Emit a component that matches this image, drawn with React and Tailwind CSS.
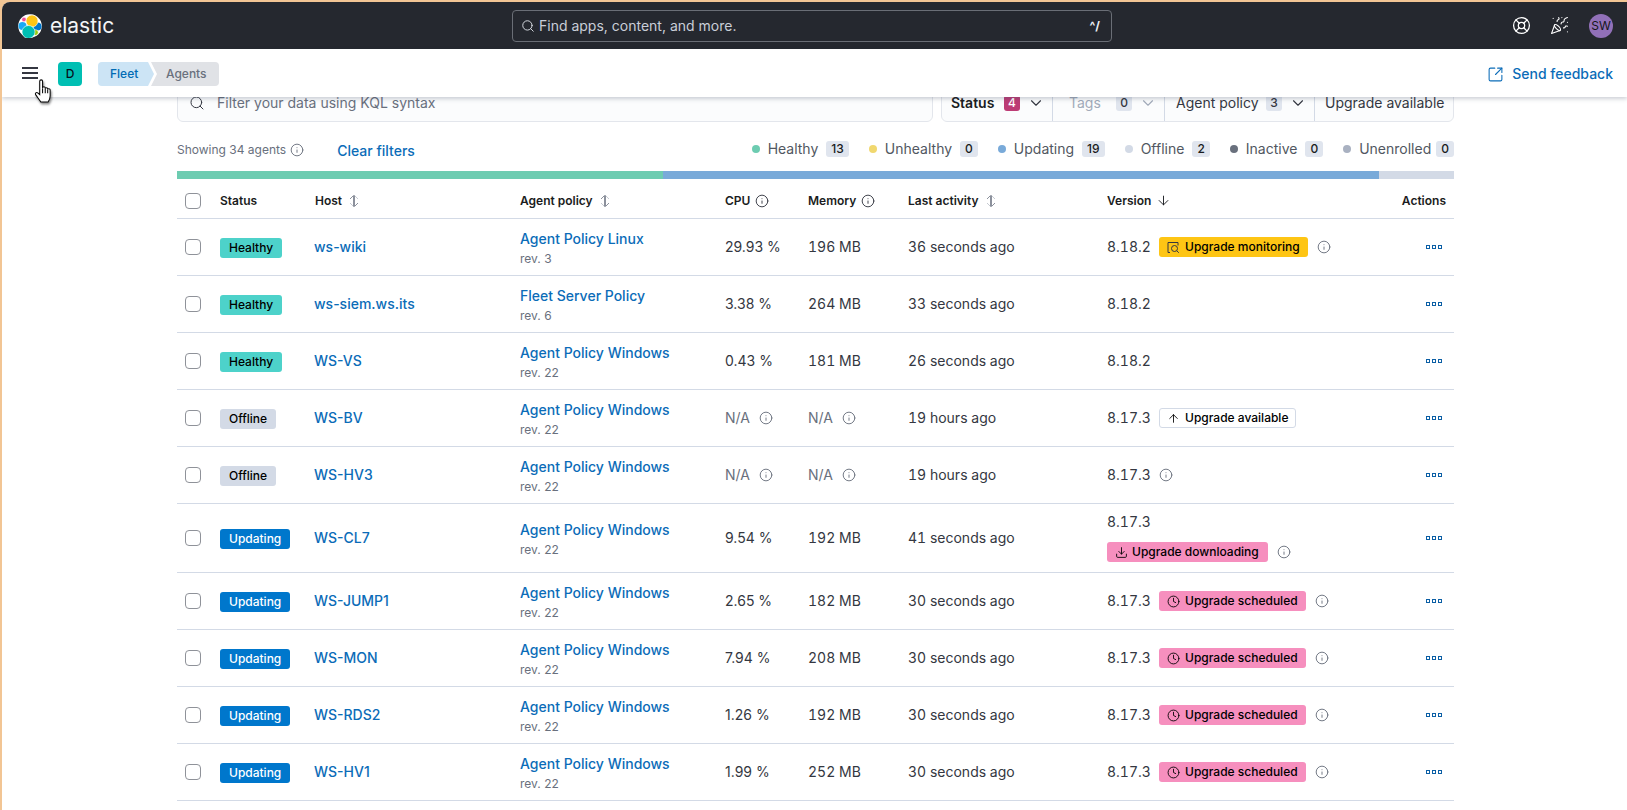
import React from 'react';
import { ArrowDown, ArrowUp, ChevronDown, Clock, Download, Info, LifeBuoy, PartyPopper, Search, SquareArrowOutUpRight } from 'lucide-react';

const rows = [
  { status: 'Healthy', host: 'ws-wiki', policy: 'Agent Policy Linux', rev: 3, cpu: '29.93 %', mem: '196 MB', last: '36 seconds ago', version: '8.18.2', tag: 'monitoring' },
  { status: 'Healthy', host: 'ws-siem.ws.its', policy: 'Fleet Server Policy', rev: 6, cpu: '3.38 %', mem: '264 MB', last: '33 seconds ago', version: '8.18.2' },
  { status: 'Healthy', host: 'WS-VS', policy: 'Agent Policy Windows', rev: 22, cpu: '0.43 %', mem: '181 MB', last: '26 seconds ago', version: '8.18.2' },
  { status: 'Offline', host: 'WS-BV', policy: 'Agent Policy Windows', rev: 22, cpu: 'N/A', mem: 'N/A', last: '19 hours ago', version: '8.17.3', tag: 'available' },
  { status: 'Offline', host: 'WS-HV3', policy: 'Agent Policy Windows', rev: 22, cpu: 'N/A', mem: 'N/A', last: '19 hours ago', version: '8.17.3', tag: 'info' },
  { status: 'Updating', host: 'WS-CL7', policy: 'Agent Policy Windows', rev: 22, cpu: '9.54 %', mem: '192 MB', last: '41 seconds ago', version: '8.17.3', tag: 'downloading' },
  { status: 'Updating', host: 'WS-JUMP1', policy: 'Agent Policy Windows', rev: 22, cpu: '2.65 %', mem: '182 MB', last: '30 seconds ago', version: '8.17.3', tag: 'scheduled' },
  { status: 'Updating', host: 'WS-MON', policy: 'Agent Policy Windows', rev: 22, cpu: '7.94 %', mem: '208 MB', last: '30 seconds ago', version: '8.17.3', tag: 'scheduled' },
  { status: 'Updating', host: 'WS-RDS2', policy: 'Agent Policy Windows', rev: 22, cpu: '1.26 %', mem: '192 MB', last: '30 seconds ago', version: '8.17.3', tag: 'scheduled' },
  { status: 'Updating', host: 'WS-HV1', policy: 'Agent Policy Windows', rev: 22, cpu: '1.99 %', mem: '252 MB', last: '30 seconds ago', version: '8.17.3', tag: 'scheduled' },
];

const legend = [
  { label: 'Healthy', count: 13, dot: 'bg-[#6dccb1]' },
  { label: 'Unhealthy', count: 0, dot: 'bg-[#f1d86f]' },
  { label: 'Updating', count: 19, dot: 'bg-[#79aad9]' },
  { label: 'Offline', count: 2, dot: 'bg-[#d3dae6]' },
  { label: 'Inactive', count: 0, dot: 'bg-[#69707d]' },
  { label: 'Unenrolled', count: 0, dot: 'bg-[#a9b1c1]' },
];

const statusStyles = {
  Healthy: 'bg-[#4dd2ca] text-black',
  Offline: 'bg-[#d3dae6] text-black',
  Updating: 'bg-[#0077cc] text-white',
};

const InfoIcon = ({ className = 'text-[#69707d]' }) => <Info size={14} strokeWidth={1.6} className={`shrink-0 ${className}`} />;

const ElasticLogo = () => (
  <svg width="24" height="24" viewBox="0 0 24 24">
    <circle cx="12" cy="12" r="11.8" fill="#fff" />
    <circle cx="4.500" cy="12" r="4" fill="#1ba9f5" />
    <circle cx="19.500" cy="12.500" r="4" fill="#0077cc" />
    <circle cx="6" cy="5.500" r="2.300" fill="#f04e98" stroke="#fff" strokeWidth="0.6" />
    <circle cx="17.500" cy="18.500" r="2.800" fill="#93c90e" stroke="#fff" strokeWidth="0.6" />
    <circle cx="14" cy="7" r="6" fill="#fec514" stroke="#fff" strokeWidth="0.6" />
    <circle cx="10.500" cy="18" r="6.500" fill="#00bfb3" stroke="#fff" strokeWidth="0.6" />
  </svg>
);

const SortIcon = () => (
  <svg width="12" height="14" viewBox="0 0 12 14" fill="none" strokeWidth="1" className="ml-[1px] shrink-0">
    <path d="M2 5 5.500 1.500V13M10 9l-3.500 3.500V1" stroke="#8c919c" />
    <path d="M6.500 1.500 10 5M5.500 12.500 2 9" stroke="#c6cad1" />
  </svg>
);

const MonitorIcon = () => (
  <svg width="13" height="13" viewBox="0 0 13 13" fill="none" stroke="#343741" strokeWidth="1">
    <path d="M3 11.500H1V1.500h10v3" />
    <circle cx="7.500" cy="7.500" r="3" />
    <path d="m9.800 9.800 2 2" />
  </svg>
);

const HandCursor = () => (
  <svg width="18" height="24" viewBox="0 0 16.800 23.500" className="absolute left-[32px] top-[77px] z-20 drop-shadow-[1px_2px_1px_rgba(0,0,0,0.45)]" fill="#fff" stroke="#000" strokeWidth="1">
    <path d="M5.200 2.200c0-1.800 2.800-1.800 2.800 0v6.600c0-1.500 2.600-1.500 2.600 0v.8c0-1.400 2.400-1.400 2.400 0v.8c0-1.200 2.400-1.200 2.400.2v6c0 2.600-1 4.400-2 6H6.400C5 20.800 2.800 17.500 1.200 15.300c-.9-1.400.7-2.800 2-1.700l2 1.800z" />
    <path d="M8 9v5M10.600 9.600V14M13 10.400V14" fill="none" />
  </svg>
);

const Tag = ({ className, icon, children }) => (
  <span className={`inline-flex h-5 items-center whitespace-nowrap rounded-[3px] text-xs font-medium text-black ${className}`}>
    {icon}
    {children}
  </span>
);

const VersionCell = ({ version, tag }) => {
  if (tag === 'downloading') {
    return (
      <div className="flex flex-col items-start">
        <span className="mb-[10px] mt-[-2px] leading-5">{version}</span>
        <div className="flex items-center gap-[9px]">
          <Tag className="gap-[4px] bg-[#f68fbe] pl-[8px] pr-[9px]" icon={<Download size={13} strokeWidth={1.6} />}>Upgrade downloading</Tag>
          <InfoIcon />
        </div>
      </div>
    );
  }
  return (
    <div className="flex items-center">
      <span className="w-[52px] shrink-0">{version}</span>
      {tag === 'monitoring' && <Tag className="gap-[5px] bg-[#fec514] px-[8px]" icon={<MonitorIcon />}>Upgrade monitoring</Tag>}
      {tag === 'scheduled' && <Tag className="gap-[5px] bg-[#f68fbe] px-[8px]" icon={<Clock size={13} strokeWidth={1.6} />}>Upgrade scheduled</Tag>}
      {tag === 'available' && (
        <Tag className="gap-[5px] border border-[#d3dae6] bg-white px-[7px]" icon={<ArrowUp size={13} strokeWidth={1.6} />}>Upgrade available</Tag>
      )}
      {tag === 'info' ? <InfoIcon /> : tag && tag !== 'available' && <span className="ml-[9px]"><InfoIcon /></span>}
    </div>
  );
};

const Th = ({ children, className = '' }) => (
  <th className={`border-b border-[#d3dae6] px-2 pt-1 text-left text-xs font-semibold text-[#1a1c21] ${className}`}>
    <div className="flex items-center gap-[5px]">{children}</div>
  </th>
);

const Td = ({ children, className = '' }) => (
  <td className={`border-b border-[#d3dae6] px-2 ${className}`}>{children}</td>
);

const Checkbox = () => <span className="block h-4 w-4 rounded-[4px] border border-[#8f9299] bg-white" />;

const FilterButton = ({ label, count, badge = 'bg-[#e0e5ee] text-[#343741]', bold, disabled, className }) => (
  <div className={`flex items-center border-r border-[#d3dae6] pt-[2px] ${className}`}>
    <span className={`${bold ? 'font-semibold text-[#1a1c21]' : disabled ? 'text-[#a2abba]' : 'text-[#343741]'}`}>{label}</span>
    <span className={`ml-auto flex h-4 w-4 items-center justify-center rounded-[3px] text-xs font-medium ${badge}`}>{count}</span>
    <ChevronDown size={18} strokeWidth={1.5} className={`ml-[7px] ${disabled ? 'text-[#a2abba]' : 'text-[#343741]'}`} />
  </div>
);

export default function App() {
  return (
    <div className="h-[810px] w-full overflow-hidden bg-[#f2c594] pl-[2px] pt-[2px] font-[Inter,sans-serif] text-sm text-[#343741]">
      <div className="relative flex h-full flex-col overflow-hidden rounded-tl-lg bg-white">
        <header className="flex h-[47px] shrink-0 items-center bg-[#25282f] pr-[14px] text-white">
          <div className="flex w-[510px] items-center gap-[8px] pl-[16px]">
            <ElasticLogo />
            <span className="text-[21px] leading-none text-[#f4f5f7]">elastic</span>
          </div>
          <div className="flex h-[32px] w-[600px] items-center rounded-[4px] border border-[#6a6e76] pl-[8px] pr-[11px]">
            <Search size={14} strokeWidth={1.6} className="text-[#dfe3ea]" />
            <span className="ml-[4px] text-[#c9ced8]">Find apps, content, and more.</span>
            <span className="ml-auto text-xs font-bold text-[#eceff4]">^/</span>
          </div>
          <div className="ml-auto flex items-center">
            <LifeBuoy size={19} strokeWidth={1.6} />
            <PartyPopper size={19} strokeWidth={1.4} className="ml-[19px]" />
            <span className="ml-[20px] flex h-6 w-6 items-center justify-center rounded-full bg-[#9170b8] text-xs text-[#14161a]">SW</span>
          </div>
        </header>

        <nav className="relative z-10 flex h-[48px] shrink-0 items-center bg-white pl-[20px] pr-[14px] pt-[2px] shadow-[0_2px_4px_rgba(60,70,95,0.25)]">
          <svg width="16" height="12" viewBox="0 0 16 12" stroke="#343741" strokeWidth="1.800" className="mb-[2px] mr-[20px]">
            <path d="M0 1h16M0 6h16M0 11h16" />
          </svg>
          <span className="flex h-6 w-6 items-center justify-center rounded-[4px] bg-[#00bfb3] text-xs font-medium text-[#07101c]">D</span>
          <div className="ml-[16px] flex h-6 items-center text-xs font-medium">
            <span className="flex h-full w-[56px] items-center rounded-l-[4px] bg-[#cce4f5] pl-[12px] text-[#006bb4] [clip-path:polygon(0_0,calc(100%-6px)_0,100%_50%,calc(100%-6px)_100%,0_100%)]">Fleet</span>
            <span className="ml-[-3px] flex h-full w-[68px] items-center rounded-r-[4px] bg-[#e0e2e6] pl-[15px] text-[#69707d] [clip-path:polygon(0_0,100%_0,100%_100%,0_100%,6px_50%)]">Agents</span>
          </div>
          <div className="ml-auto flex items-center gap-[5px] font-medium text-[#0b6cb8]">
            <SquareArrowOutUpRight size={17} strokeWidth={1.5} className="mr-[3px]" />
            <span>Send feedback</span>
          </div>
        </nav>

        <HandCursor />

        <main className="min-h-0 flex-1 pl-[175px] pr-[173px]">
          <div className="mt-[-15px] flex h-10 gap-[8px]">
            <div className="flex w-[756px] items-center rounded-b-[6px] border border-[#e3e6ec] bg-[#fbfcfd] pl-[11px] pt-[2px] text-[#69707d]">
              <Search size={16} strokeWidth={1.5} className="text-[#343741]" />
              <span className="ml-[12px]">Filter your data using KQL syntax</span>
            </div>
            <div className="flex flex-1 rounded-b-[6px] border border-[#e3e6ec] bg-[#fbfcfd]">
              <FilterButton label="Status" count={4} bold badge="bg-[#bd3c75] text-white" className="w-[111px] pl-[9px] pr-[7px]" />
              <FilterButton label="Tags" count={0} disabled className="w-[112px] pl-[16px] pr-[7px]" />
              <FilterButton label="Agent policy" count={3} className="w-[150px] pl-[11px] pr-[7px]" />
              <div className="flex flex-1 items-center pl-[10px] pt-[2px] text-[#343741]">Upgrade available</div>
            </div>
          </div>

          <div className="mt-[18px] flex h-5 items-center">
            <span className="text-xs text-[#69707d]">Showing 34 agents</span>
            <span className="ml-[4px]"><InfoIcon /></span>
            <span className="ml-[33px] mt-[2px] font-medium text-[#0b6cb8]">Clear filters</span>
            <div className="mb-[2px] ml-auto flex items-center gap-[20px] text-[#515761]">
              {legend.map((item) => (
                <div key={item.label} className="flex items-center">
                  <span className={`h-2 w-2 rounded-full ${item.dot}`} />
                  <span className="ml-[8px]">{item.label}</span>
                  <span className={`${item.label === 'Unenrolled' ? 'ml-[5px]' : 'ml-[8px]'} flex h-4 min-w-4 items-center justify-center rounded-[3px] bg-[#e0e5ee] px-[5px] text-xs font-medium text-[#1a1c21]`}>{item.count}</span>
                </div>
              ))}
            </div>
          </div>

          <div className="mt-[11px] flex h-2">
            <div className="w-[486px] bg-[#6dccb1]" />
            <div className="w-[716px] bg-[#79aad9]" />
            <div className="flex-1 bg-[#d3dae6]" />
          </div>

          <table className="w-full table-fixed border-separate border-spacing-0">
            <colgroup>
              <col className="w-[36px]" />
              <col className="w-[94px]" />
              <col className="w-[205px]" />
              <col className="w-[205px]" />
              <col className="w-[83px]" />
              <col className="w-[100px]" />
              <col className="w-[199px]" />
              <col />
              <col className="w-[80px]" />
            </colgroup>
            <thead>
              <tr className="h-[40px]">
                <Th><Checkbox /></Th>
                <Th className="pl-[7px]">Status</Th>
                <Th>Host <SortIcon /></Th>
                <Th>Agent policy <SortIcon /></Th>
                <Th>CPU <InfoIcon className="text-[#343741]" /></Th>
                <Th>Memory <InfoIcon className="text-[#343741]" /></Th>
                <Th>Last activity <SortIcon /></Th>
                <Th>Version <ArrowDown size={15} strokeWidth={1.5} /></Th>
                <Th className="text-right"><span className="ml-auto">Actions</span></Th>
              </tr>
            </thead>
            <tbody>
              {rows.map((row) => (
                <tr key={row.host} className={row.tag === 'downloading' ? 'h-[69px]' : 'h-[57px]'}>
                  <Td><Checkbox /></Td>
                  <Td className="pl-[7px]">
                    <span className={`inline-flex h-5 items-center rounded-[3px] px-[9px] align-middle text-xs font-medium ${statusStyles[row.status]}`}>{row.status}</span>
                  </Td>
                  <Td className="pl-[7px] font-medium text-[#0b6cb8]">{row.host}</Td>
                  <Td>
                    <div className="pt-1 font-medium leading-5 text-[#0b6cb8]">{row.policy}</div>
                    <div className="text-xs leading-5 text-[#69707d]">rev. {row.rev}</div>
                  </Td>
                  <Td>
                    {row.cpu === 'N/A' ? <span className="flex items-center gap-[9px] text-[#69707d]">N/A <InfoIcon /></span> : row.cpu}
                  </Td>
                  <Td className="tabular-nums">
                    {row.mem === 'N/A' ? <span className="flex items-center gap-[9px] text-[#69707d]">N/A <InfoIcon /></span> : row.mem}
                  </Td>
                  <Td className="tabular-nums">{row.last}</Td>
                  <Td className="tabular-nums"><VersionCell version={row.version} tag={row.tag} /></Td>
                  <Td>
                    <div className="flex justify-end gap-[2px] pr-[4px]">
                      <span className="h-1 w-1 border border-[#0b5fa5]" />
                      <span className="h-1 w-1 border border-[#0b5fa5]" />
                      <span className="h-1 w-1 border border-[#0b5fa5]" />
                    </div>
                  </Td>
                </tr>
              ))}
            </tbody>
          </table>
        </main>
      </div>
    </div>
  );
}
